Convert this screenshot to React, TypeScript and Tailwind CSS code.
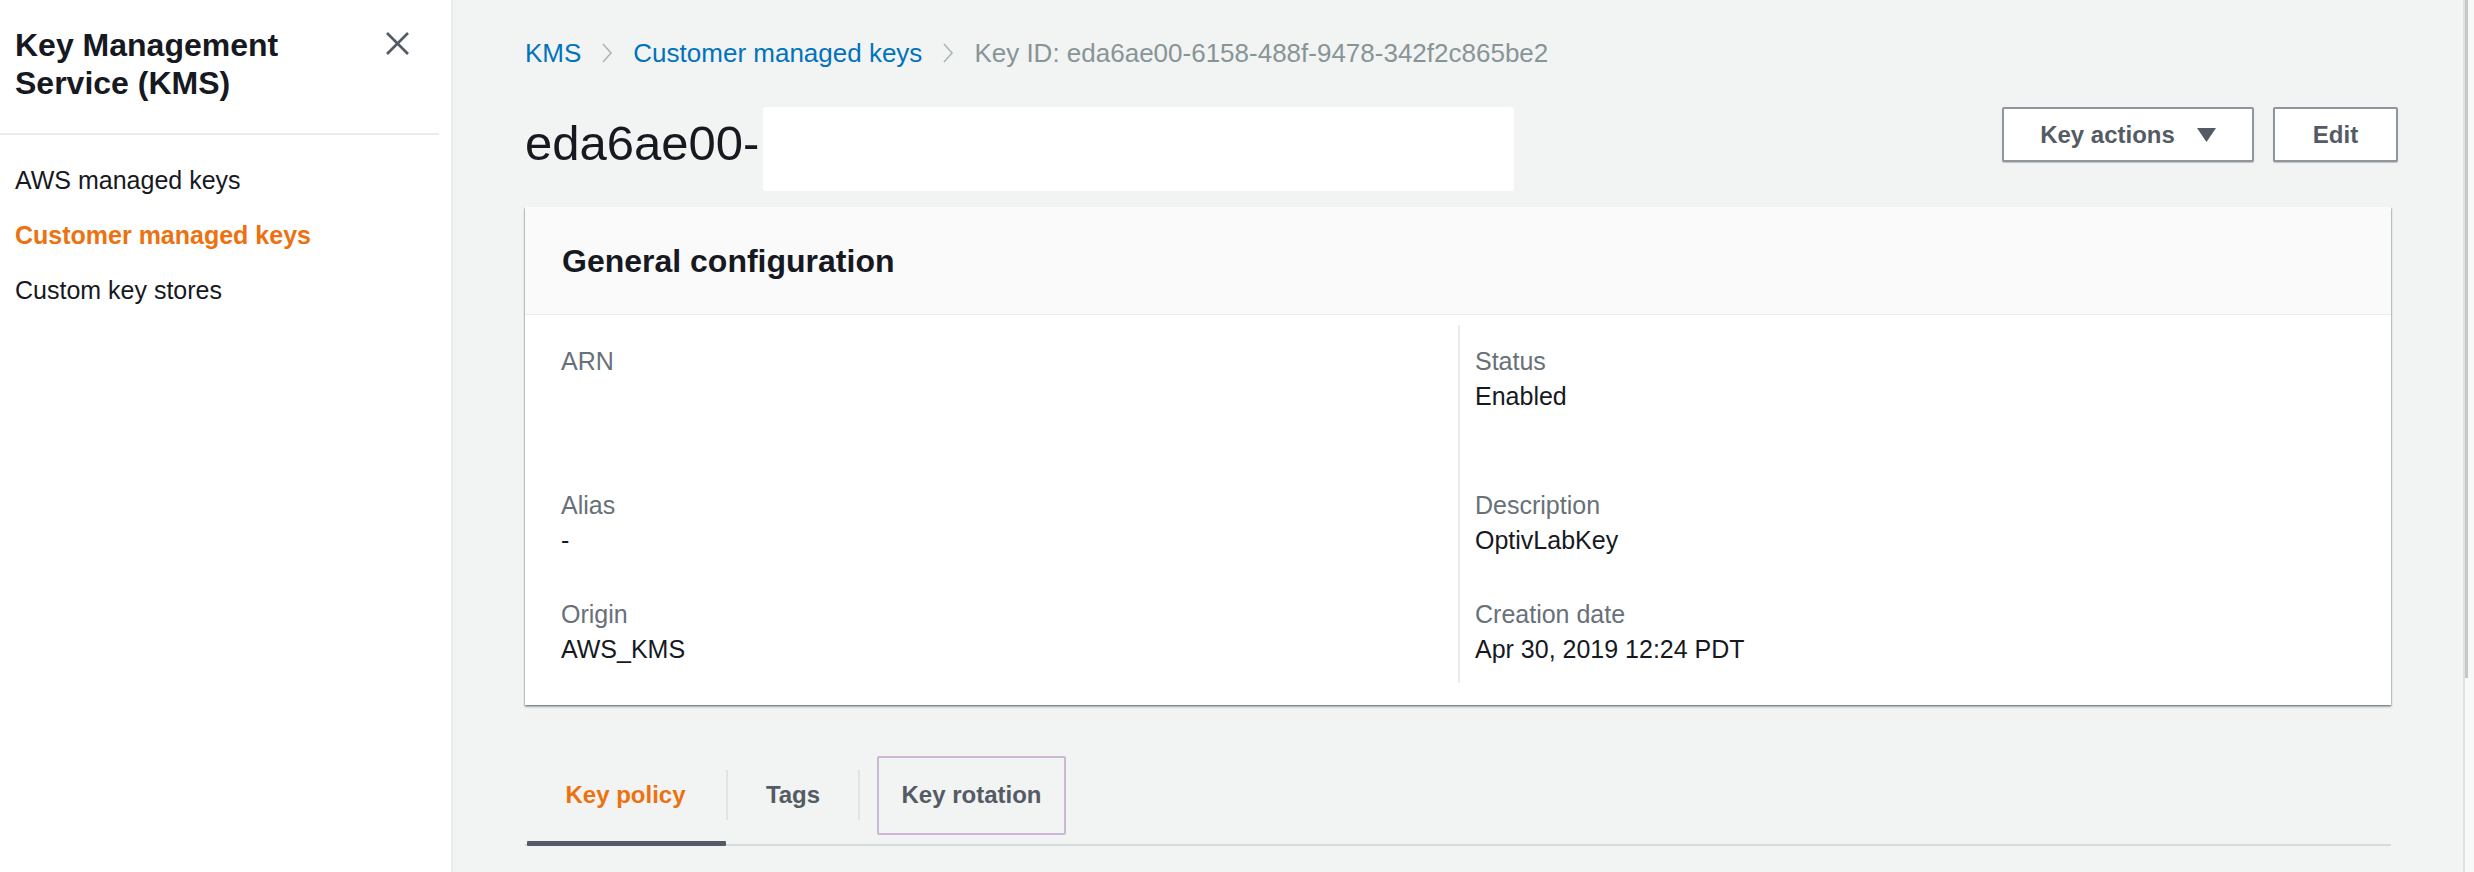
import React from "react";

function Chevron() {
  return (
    <svg width="12" height="20" viewBox="0 0 12 20" className="mx-[20px] shrink-0">
      <polyline points="2,1 10,10 2,19" fill="none" stroke="#aab7b8" strokeWidth="1.6" />
    </svg>
  );
}

function Field({ label, value, h }: { label: string; value?: string; h: string }) {
  return (
    <div className={`flex flex-col ${h}`}>
      <div className="text-[25px] leading-[35px] text-[#687078]">{label}</div>
      {value !== undefined && <div className="text-[25px] leading-[35px] text-[#16191f]">{value}</div>}
    </div>
  );
}

export default function App() {
  return (
    <div
      className="flex w-[2474px] h-[872px] overflow-hidden bg-[#f2f3f3]"
      style={{ fontFamily: '"Liberation Sans", Arial, sans-serif' }}
    >
      {/* Sidebar */}
      <aside className="w-[453px] shrink-0 bg-white border-r-2 border-[#e9ebed] flex flex-col">
        <div className="flex justify-between items-start pl-[15px] pr-[41px] pt-[26px]">
          <div className="w-[340px] text-[32px] leading-[38px] font-bold text-[#16191f]">
            Key Management Service (KMS)
          </div>
          <svg width="25" height="23" viewBox="0 0 25 23" className="mt-[6px]">
            <line x1="2" y1="1" x2="23" y2="22" stroke="#545b64" strokeWidth="2.6" />
            <line x1="23" y1="1" x2="2" y2="22" stroke="#545b64" strokeWidth="2.6" />
          </svg>
        </div>
        <div className="mt-[31px] mr-[12px] h-[2px] bg-[#eaeded]" />
        <nav className="flex flex-col pt-[18px] pl-[15px] text-[25px]">
          <div className="h-[55px] leading-[55px] text-[#16191f]">AWS managed keys</div>
          <div className="h-[55px] leading-[55px] text-[#ec7211] font-bold">Customer managed keys</div>
          <div className="h-[55px] leading-[55px] text-[#16191f]">Custom key stores</div>
        </nav>
      </aside>

      {/* Main */}
      <main className="flex-1 flex flex-col px-[72px] pt-[38px]">
        {/* Breadcrumb */}
        <div className="flex items-center h-[30px] text-[26px] whitespace-nowrap">
          <span className="text-[#0073bb]">KMS</span>
          <Chevron />
          <span className="text-[#0073bb]">Customer managed keys</span>
          <Chevron />
          <span className="text-[#879596]">Key ID: eda6ae00-6158-488f-9478-342f2c865be2</span>
        </div>

        {/* Title row */}
        <div className="flex items-start mt-[39px] h-[84px]">
          <h1 className="mt-[6px] text-[49px] leading-[60px] text-[#16191f] font-normal">eda6ae00-</h1>
          <div className="ml-[4px] w-[751px] h-[84px] bg-white rounded-[3px]" />
          <div className="ml-auto -mr-[7px] flex gap-[19px]">
            <button className="w-[252px] h-[55px] bg-white border-2 border-[#8f969c] rounded-[2px] shadow-[0_1px_1px_rgba(0,0,0,0.2)] flex items-center justify-center gap-[22px] text-[24px] font-bold text-[#545b64]">
              <span>Key actions</span>
              <svg width="19" height="14" viewBox="0 0 19 14">
                <polygon points="0,0 19,0 9.5,14" fill="#545b64" />
              </svg>
            </button>
            <button className="w-[125px] h-[55px] bg-white border-2 border-[#8f969c] rounded-[2px] shadow-[0_1px_1px_rgba(0,0,0,0.2)] text-[24px] font-bold text-[#545b64]">
              Edit
            </button>
          </div>
        </div>

        {/* Card */}
        <section className="mt-[16px] bg-white shadow-[0_2px_2px_rgba(0,28,36,0.3),1px_1px_1px_rgba(0,28,36,0.15),-1px_1px_1px_rgba(0,28,36,0.15)]">
          <div className="h-[108px] bg-[#fafafa] border-b border-[#eaeded] flex items-center pl-[37px]">
            <h2 className="text-[32px] font-bold text-[#16191f]">General configuration</h2>
          </div>
          <div className="grid grid-cols-2 pt-[10px] pb-[22px]">
            <div className="flex flex-col gap-[39px] pt-[19px] pb-[16px] pl-[36px]">
              <Field label="ARN" h="h-[105px]" />
              <Field label="Alias" value="-" h="h-[70px]" />
              <Field label="Origin" value="AWS_KMS" h="h-[70px]" />
            </div>
            <div className="flex flex-col gap-[39px] pt-[19px] pb-[16px] pl-[15px] border-l-2 border-[#eaeded]">
              <Field label="Status" value="Enabled" h="h-[105px]" />
              <Field label="Description" value="OptivLabKey" h="h-[70px]" />
              <Field label="Creation date" value="Apr 30, 2019 12:24 PDT" h="h-[70px]" />
            </div>
          </div>
        </section>

        {/* Tabs */}
        <div className="mt-[41px] flex items-center h-[100px] border-b-2 border-[#d5dbdb]">
          <div className="relative w-[201px] h-full flex items-center justify-center text-[24px] font-bold text-[#ec7211]">
            Key policy
            <div className="absolute left-[2px] right-0 bottom-[-2px] h-[5px] bg-[#545b64] rounded-[1px]" />
          </div>
          <div className="w-[2px] h-[50px] bg-[#e1e4e4]" />
          <div className="w-[130px] h-full flex items-center justify-center text-[24px] font-bold text-[#545b64]">
            Tags
          </div>
          <div className="w-[2px] h-[50px] bg-[#e1e4e4]" />
          <div className="w-[223px] h-full flex items-center pl-[17px]">
            <div className="w-[189px] h-[79px] border-2 border-[#cbb8d4] rounded-[2px] flex items-center justify-center text-[24px] font-bold text-[#545b64]">
              Key rotation
            </div>
          </div>
        </div>
      </main>

      {/* Scrollbar strip */}
      <div className="w-[11px] shrink-0 bg-[#f7f8f8] border-l-2 border-[#dfe2e2] flex flex-col">
        <div className="h-[678px] w-[3px] bg-[#c4c8ca]" />
      </div>
    </div>
  );
}
